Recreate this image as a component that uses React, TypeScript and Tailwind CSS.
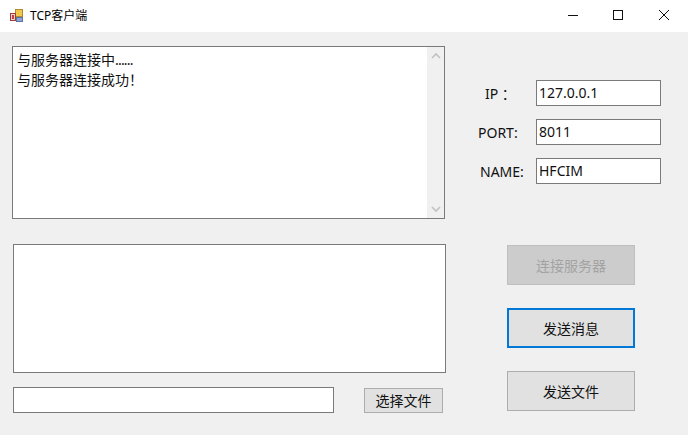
const fontCls = "font-['Noto_Sans','Noto_Sans_CJK_SC',sans-serif]";

function AppIcon() {
  return (
    <svg width="16" height="16" viewBox="0 0 16 16" className="shrink-0">
      <rect x="6.5" y="1.5" width="7" height="7" fill="#f2c84b" stroke="#b08a2c" />
      <rect x="1.5" y="5.5" width="5" height="7" fill="#e8d5d0" stroke="#a03a36" />
      <rect x="3" y="7" width="2" height="4" fill="#c8403a" />
      <rect x="7.5" y="9.5" width="6" height="4" fill="#8ea3d6" stroke="#5f72a8" />
    </svg>
  );
}

function WinButtons() {
  return (
    <div className="flex items-center pr-[19px] pb-[2px] gap-[35px]">
      <svg width="10" height="10" viewBox="0 0 10 10">
        <path d="M0 5.5h10" stroke="#111" strokeWidth="1" />
      </svg>
      <svg width="10" height="10" viewBox="0 0 10 10">
        <rect x="0.5" y="0.5" width="9" height="9" fill="none" stroke="#111" />
      </svg>
      <svg width="10" height="10" viewBox="0 0 10 10" className="ml-px">
        <path d="M0 0l10 10M10 0L0 10" stroke="#111" strokeWidth="1" />
      </svg>
    </div>
  );
}

function ScrollBar() {
  return (
    <div className="w-[17px] h-full bg-[#f0f0f0] flex flex-col justify-between items-center py-[5px]">
      <svg width="10" height="8" viewBox="0 0 10 8">
        <path d="M1 6l4-4 4 4" fill="none" stroke="#c2c2c2" strokeWidth="1.6" />
      </svg>
      <svg width="10" height="8" viewBox="0 0 10 8">
        <path d="M1 2l4 4 4-4" fill="none" stroke="#c2c2c2" strokeWidth="1.6" />
      </svg>
    </div>
  );
}

function Field({ label, value, labelCls }: { label: string; value: string; labelCls: string }) {
  return (
    <div className="flex items-center h-[26px]">
      <span className={`w-[71px] text-[14px] text-[#111] ${labelCls}`}>{label}</span>
      <div className="w-[125px] h-[26px] bg-white border border-[#7a7a7a] pl-[2px] text-[14px] leading-[24px] text-[#111]">
        {value}
      </div>
    </div>
  );
}

export default function App() {
  return (
    <div className={`w-[688px] h-[435px] bg-[#f0f0f0] overflow-hidden flex flex-col ${fontCls}`}>
      <div className="h-[32px] bg-white flex items-center justify-between shrink-0">
        <div className="flex items-center pl-[9px] gap-[5px] text-[12px] text-black">
          <AppIcon />
          <span>TCP客户端</span>
        </div>
        <WinButtons />
      </div>

      <div className="flex flex-1">
        <div className="w-[465px] flex flex-col pl-[12px] pt-[14px] shrink-0">
          <div className="w-[433px] h-[173px] bg-white border border-[#7a7a7a] flex justify-between text-[14px] text-[#111]">
            <div className="pl-[4px] pt-[3px] leading-[20px]">
              <div>
                与服务器连接中<span className="tracking-[-0.8px]">......</span>
              </div>
              <div>与服务器连接成功！</div>
            </div>
            <ScrollBar />
          </div>
          <div className="w-[433px] h-[129px] ml-px mt-[25px] bg-white border border-[#7a7a7a]" />
          <div className="flex items-center mt-[14px] ml-px">
            <div className="w-[321px] h-[26px] bg-white border border-[#7a7a7a]" />
            <button className="w-[79px] h-[25px] ml-[30px] mt-px bg-[#e1e1e1] border border-[#adadad] text-[14px] text-[#111]">
              选择文件
            </button>
          </div>
        </div>

        <div className="flex flex-col pt-[48px]">
          <div className="flex flex-col gap-[13px]">
            <Field label="IP ：" value="127.0.0.1" labelCls="pl-[20px]" />
            <Field label="PORT:" value="8011" labelCls="pl-[13px]" />
            <Field label="NAME:" value="HFCIM" labelCls="pl-[15px]" />
          </div>
          <div className="flex flex-col gap-[23px] mt-[61px] ml-[42px]">
            <button className="w-[128px] h-[40px] bg-[#cccccc] border border-[#bfbfbf] text-[14px] text-[#a3a3a3]">
              连接服务器
            </button>
            <button className="w-[128px] h-[40px] bg-[#e1e1e1] border-2 border-[#0078d7] text-[14px] text-[#111]">
              发送消息
            </button>
            <button className="w-[128px] h-[40px] bg-[#e1e1e1] border border-[#adadad] text-[14px] text-[#111]">
              发送文件
            </button>
          </div>
        </div>
      </div>
    </div>
  );
}
